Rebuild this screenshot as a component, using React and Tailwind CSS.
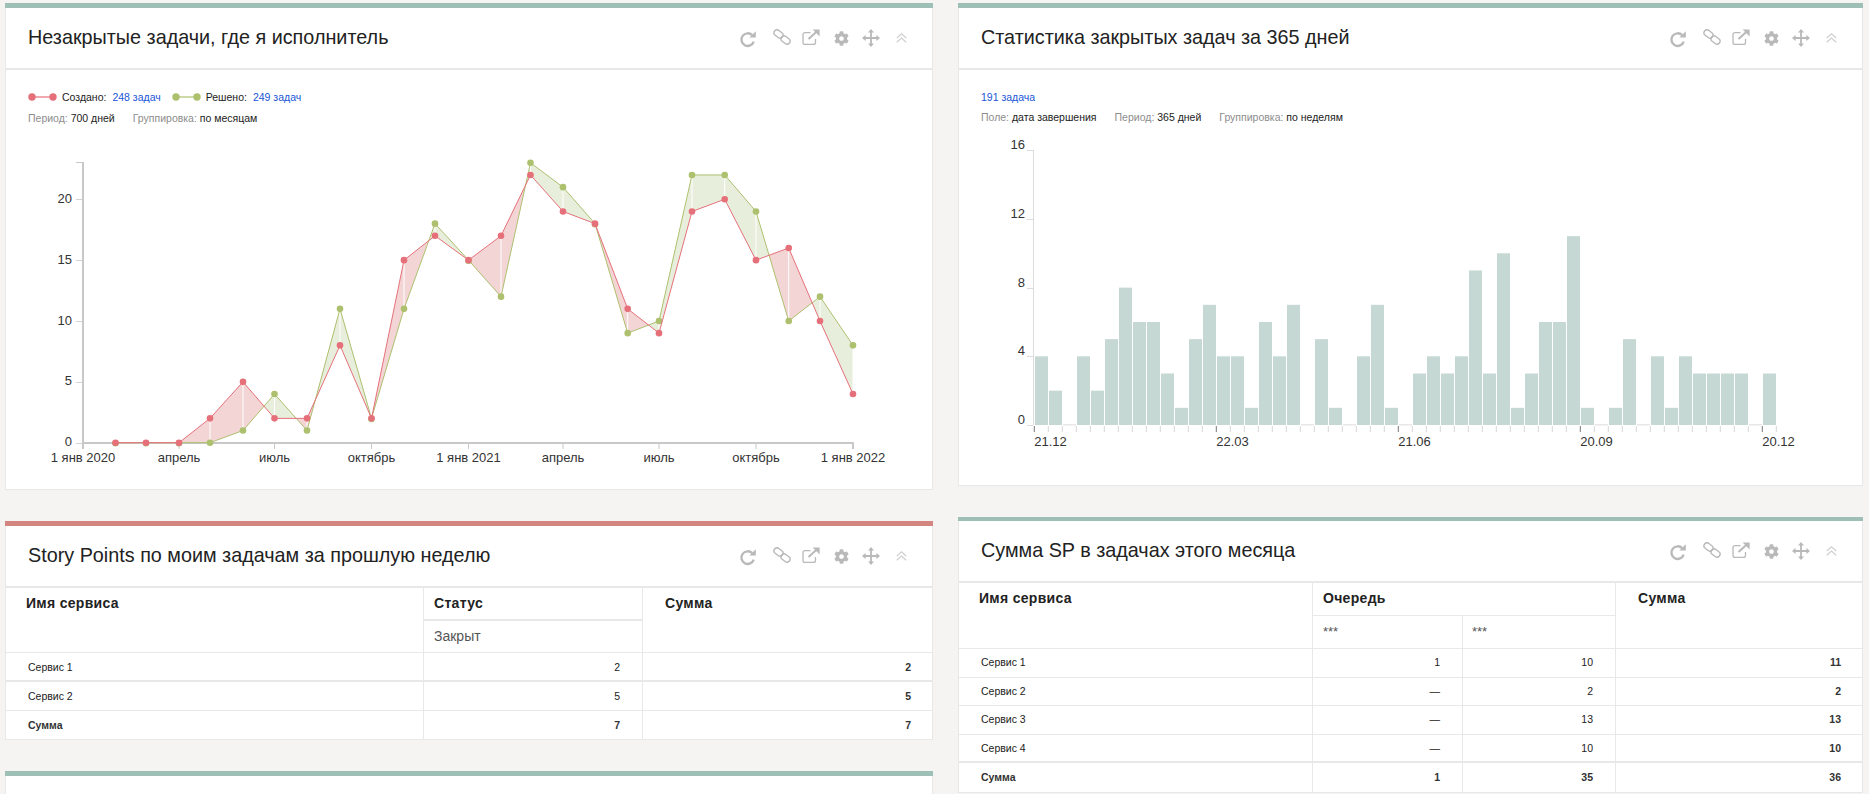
import React from "react";
import { FaCog } from "react-icons/fa";

const FONT = "font-['Liberation_Sans',Arial,sans-serif]";
const GRAY = "#b9b9b9";

function Refresh() {
  return (
    <svg width="18" height="18" viewBox="0 0 18 18" className="mt-[1px] ml-[2px]">
      <path d="M13.2 5.2A6.3 6.3 0 1 0 14.7 11.6" fill="none" stroke={GRAY} strokeWidth="2.4" />
      <polygon points="16.8,1.2 16.8,7.6 10.4,7.6" fill={GRAY} />
    </svg>
  );
}
function LinkIcon() {
  return (
    <svg width="18" height="16" viewBox="0 0 18 16" className="mb-[3px] ml-[1px]">
      <rect x="0.6" y="2" width="9.8" height="6" rx="3" transform="rotate(38 5.5 5)" fill="none" stroke={GRAY} strokeWidth="1.4" />
      <rect x="7.6" y="8" width="9.8" height="6" rx="3" transform="rotate(38 12.5 11)" fill="none" stroke={GRAY} strokeWidth="1.4" />
    </svg>
  );
}
function External() {
  return (
    <svg width="18" height="16" viewBox="0 0 18 16" className="mb-[2px]">
      <path d="M8.5 3.6H3a2 2 0 0 0-2 2v7.9a2 2 0 0 0 2 2h8.5a2 2 0 0 0 2-2V10" fill="none" stroke={GRAY} strokeWidth="1.3" />
      <path d="M6.5 10L14 3.2" fill="none" stroke={GRAY} strokeWidth="2" />
      <polygon points="10.6,0.4 17.6,0.4 17.6,7.4" fill={GRAY} />
    </svg>
  );
}
function Move() {
  return (
    <svg width="18" height="18" viewBox="0 0 18 18">
      <path d="M9 2V16M2 9H16" fill="none" stroke={GRAY} strokeWidth="1.8" />
      <polygon points="9,0 12,3.6 6,3.6" fill={GRAY} />
      <polygon points="9,18 12,14.4 6,14.4" fill={GRAY} />
      <polygon points="0,9 3.6,6 3.6,12" fill={GRAY} />
      <polygon points="18,9 14.4,6 14.4,12" fill={GRAY} />
    </svg>
  );
}
function Chevrons() {
  return (
    <svg width="11" height="10" viewBox="0 0 11 10">
      <path d="M0.8 5L5.5 0.9L10.2 5M0.8 9.2L5.5 5.1L10.2 9.2" fill="none" stroke="#cfcfcf" strokeWidth="1.2" />
    </svg>
  );
}

function Slot({ children, className = "" }) {
  return <span className={"flex w-[30px] items-center justify-center " + className}>{children}</span>;
}

function Card({ bar, barH, title, hdr, className = "", children }) {
  return (
    <section className={"bg-white border-x border-b border-[#e8e8e8] " + className}>
      <div className={"-mx-px " + bar + " " + barH} />
      <header className={"flex items-center justify-between border-b-2 border-[#e8e8e8] pl-[22px] pr-[16px] " + hdr}>
        <h2 className="text-[19.8px] leading-[24px] font-normal text-[#222] mb-[2px]">{title}</h2>
        <div className="flex items-center">
          <Slot className="mr-[4px]"><Refresh /></Slot>
          <Slot><LinkIcon /></Slot>
          <Slot><External /></Slot>
          <Slot><FaCog size={15} color={GRAY} /></Slot>
          <Slot><Move /></Slot>
          <Slot><Chevrons /></Slot>
        </div>
      </header>
      {children}
    </section>
  );
}

function Marker({ color }) {
  return (
    <svg width="29" height="8" viewBox="0 0 29 8" className="shrink-0">
      <path d="M4 4H25" stroke={color} strokeWidth="1.2" />
      <circle cx="4" cy="4" r="3.7" fill={color} />
      <circle cx="25" cy="4" r="3.7" fill={color} />
    </svg>
  );
}

const Muted = ({ children }) => <span className="text-[#8d8d8d]">{children}</span>;
const Link = ({ children }) => <span className="text-[#1a56d6]">{children}</span>;

/* ---------- first chart ---------- */
const XS = [115.5, 146, 179, 210, 243, 274.5, 307, 340, 371.5, 404, 435, 468.5, 501, 530.5, 563, 595, 627.7, 659, 692, 724.7, 756, 788.7, 820, 853];
const CREATED = [0, 0, 0, 2, 5, 2, 2, 8, 2, 15, 17, 15, 17, 22, 19, 18, 11, 9, 19, 20, 15, 16, 10, 4];
const RESOLVED = [0, 0, 0, 0, 1, 4, 1, 11, 2, 11, 18, 15, 12, 23, 21, 18, 9, 10, 22, 22, 19, 10, 12, 8];
const Y0 = 442.7;
const yv = (v) => Y0 - v * 12.17;
const PINK = "#f3d5d6";
const PALE = "#e8eedc";
const RED = "#e6707a";
const GREEN = "#adc06e";

function areas() {
  const out = [];
  for (let i = 0; i < XS.length - 1; i++) {
    const x1 = XS[i], x2 = XS[i + 1];
    const d1 = CREATED[i] - RESOLVED[i], d2 = CREATED[i + 1] - RESOLVED[i + 1];
    const c1 = yv(CREATED[i]), c2 = yv(CREATED[i + 1]), r1 = yv(RESOLVED[i]), r2 = yv(RESOLVED[i + 1]);
    if (d1 === 0 && d2 === 0) continue;
    if (d1 * d2 >= 0) {
      out.push({ p: `${x1},${c1} ${x2},${c2} ${x2},${r2} ${x1},${r1}`, f: d1 + d2 > 0 ? PINK : PALE });
    } else {
      const t = d1 / (d1 - d2);
      const xm = x1 + (x2 - x1) * t, ym = c1 + (c2 - c1) * t;
      out.push({ p: `${x1},${c1} ${xm},${ym} ${x1},${r1}`, f: d1 > 0 ? PINK : PALE });
      out.push({ p: `${x2},${c2} ${xm},${ym} ${x2},${r2}`, f: d2 > 0 ? PINK : PALE });
    }
  }
  return out;
}

function LineChart() {
  const ticks = [
    [83, "1 янв 2020"], [179, "апрель"], [274.5, "июль"], [371.5, "октябрь"], [468.5, "1 янв 2021"],
    [563, "апрель"], [659, "июль"], [756, "октябрь"], [853, "1 янв 2022"],
  ];
  const poly = (arr) => arr.map((v, i) => `${XS[i]},${yv(v)}`).join(" ");
  return (
    <svg width="926" height="349" viewBox="6 140 926 349" className="block">
      {areas().map((a, i) => <polygon key={i} points={a.p} fill={a.f} />)}
      {XS.map((x, i) => CREATED[i] !== RESOLVED[i] && (
        <line key={i} x1={x} x2={x} y1={yv(CREATED[i])} y2={yv(RESOLVED[i])} stroke="#fff" strokeWidth="1" />
      ))}
      <path d="M83 162.5H76M83 162V444" stroke="#c8c8c8" strokeWidth="1" fill="none" />
      <path d="M83 162V444" stroke="#c8c8c8" strokeWidth="2" fill="none" />
      <path d="M82 443H854" stroke="#c8c8c8" strokeWidth="2" fill="none" />
      {[0, 5, 10, 15, 20].map((v) => (
        <g key={v}>
          <line x1="76" x2="82" y1={Math.round(yv(v)) + 0.5} y2={Math.round(yv(v)) + 0.5} stroke="#d4d4d4" />
          <text x="72" y={yv(v) + 3.5} textAnchor="end" fontSize="13" fill="#333">{v}</text>
        </g>
      ))}
      {ticks.map(([x, t], i) => (
        <g key={i}>
          <line x1={x} x2={x} y1="443" y2="449" stroke="#c8c8c8" strokeWidth={i === 0 || i === 8 ? 2 : 1} />
          <text x={x} y="462" textAnchor="middle" fontSize="13" fill="#333">{t}</text>
        </g>
      ))}
      <polyline points={poly(RESOLVED)} fill="none" stroke={GREEN} strokeWidth="1" />
      {RESOLVED.map((v, i) => <circle key={i} cx={XS[i]} cy={yv(v) + (v === CREATED[i] ? 0.6 : 0)} r="3.3" fill={GREEN} />)}
      <polyline points={poly(CREATED)} fill="none" stroke={RED} strokeWidth="1" />
      {CREATED.map((v, i) => <circle key={i} cx={XS[i]} cy={yv(v)} r="3.3" fill={RED} />)}
    </svg>
  );
}

/* ---------- second chart ---------- */
const BARS = [4, 2, 0, 4, 2, 5, 8, 6, 6, 3, 1, 5, 7, 4, 4, 1, 6, 4, 7, 0, 5, 1, 0, 4, 7, 1, 0, 3, 4, 3, 4, 9, 3, 10, 1, 3, 6, 6, 11, 1, 0, 1, 5, 0, 4, 1, 4, 3, 3, 3, 3, 0, 3];

function BarChart() {
  const tx = (i) => 1034.3 + 14 * i;
  const major = { 0: "21.12", 13: "22.03", 26: "21.06", 39: "20.09", 52: "20.12" };
  return (
    <svg width="903" height="355" viewBox="959 130 903 355" className="block">
      <path d="M1033.5 150V425" stroke="#dcdcdc" fill="none" />
      {[0, 4, 8, 12, 16].map((v) => {
        const y = 425 - v * 17.17;
        return (
          <g key={v}>
            <line x1="1027" x2="1033" y1={Math.round(y) + 0.5} y2={Math.round(y) + 0.5} stroke="#dcdcdc" />
            <text x="1025" y={y - 1} textAnchor="end" fontSize="13" fill="#333">{v}</text>
          </g>
        );
      })}
      {BARS.map((v, i) => v > 0
        ? <rect key={i} x={tx(i) + 0.7} y={425 - v * 17.17} width="13" height={v * 17.17} fill="#c6d8d4" />
        : <rect key={i} x={tx(i) + 0.7} y="424" width="13" height="1.5" fill="#e9e7e7" />)}
      {Array.from({ length: 54 }, (_, i) => (
        <line key={i} x1={tx(i)} x2={tx(i)} y1="426" y2="432" stroke={major[i] ? "#777" : "#d6d6d6"} />
      ))}
      {Object.entries(major).map(([i, t]) => (
        <text key={i} x={tx(Number(i))} y="446" fontSize="13" fill="#333">{t}</text>
      ))}
    </svg>
  );
}

/* ---------- tables ---------- */
const LINE = "border-[#e8e8e8]";
const TH = "align-top text-left text-[14px] leading-[16px] font-bold text-[#222] tracking-[0.3px]";
const SUB = "align-top text-left font-normal text-[#555]";
const ROW = "text-[10.5px] leading-[14px] text-[#222] align-middle";

function Cell({ children, className = "", bold }) {
  return <td className={`${ROW} ${LINE} ${bold ? "font-bold text-[#333]" : ""} ${className}`}>{children}</td>;
}

function TableOne() {
  const rows = [["Сервис 1", "2", "2", 29, "border-b-2"], ["Сервис 2", "5", "5", 29, "border-b"], ["Сумма", "7", "7", 28, ""]];
  return (
    <table className="w-full table-fixed border-separate border-spacing-0">
      <colgroup><col className="w-[418px]" /><col className="w-[219px]" /><col /></colgroup>
      <thead>
        <tr className="h-[33px]">
          <th rowSpan={2} className={`${TH} ${LINE} border-r border-b pl-[20px] pt-[7px]`}>Имя сервиса</th>
          <th className={`${TH} ${LINE} border-r border-b-2 pl-[10px] pt-[7px]`}>Статус</th>
          <th rowSpan={2} className={`${TH} ${LINE} border-b pl-[22px] pt-[7px]`}>Сумма</th>
        </tr>
        <tr className="h-[32px]">
          <th className={`${SUB} ${LINE} border-r border-b pl-[10px] pt-[7px] text-[14px] leading-[16px]`}>Закрыт</th>
        </tr>
      </thead>
      <tbody>
        {rows.map(([a, b, c, h, line]) => (
          <tr key={a} style={{ height: h }}>
            <Cell bold={a === "Сумма"} className={`border-r pl-[22px] ${line}`}>{a}</Cell>
            <Cell bold={a === "Сумма"} className={`border-r pr-[22px] text-right ${line}`}>{b}</Cell>
            <Cell bold className={`pr-[21px] text-right ${line}`}>{c}</Cell>
          </tr>
        ))}
      </tbody>
    </table>
  );
}

function TableTwo() {
  const rows = [
    ["Сервис 1", "1", "10", "11", "border-b"],
    ["Сервис 2", "—", "2", "2", "border-b"],
    ["Сервис 3", "—", "13", "13", "border-b"],
    ["Сервис 4", "—", "10", "10", "border-b-2"],
    ["Сумма", "1", "35", "36", ""],
  ];
  return (
    <table className="w-full table-fixed border-separate border-spacing-0">
      <colgroup><col className="w-[354px]" /><col className="w-[150px]" /><col className="w-[153px]" /><col /></colgroup>
      <thead>
        <tr className="h-[33px]">
          <th rowSpan={2} className={`${TH} ${LINE} border-r border-b pl-[20px] pt-[7px]`}>Имя сервиса</th>
          <th colSpan={2} className={`${TH} ${LINE} border-r border-b pl-[10px] pt-[7px]`}>Очередь</th>
          <th rowSpan={2} className={`${TH} ${LINE} border-b pl-[22px] pt-[7px]`}>Сумма</th>
        </tr>
        <tr className="h-[33px]">
          <th className={`${SUB} ${LINE} border-r border-b pl-[10px] pt-[9px] text-[13px] leading-[14px]`}>***</th>
          <th className={`${SUB} ${LINE} border-r border-b pl-[9px] pt-[9px] text-[13px] leading-[14px]`}>***</th>
        </tr>
      </thead>
      <tbody>
        {rows.map(([a, b, c, d, line]) => (
          <tr key={a} className="h-[28.6px]">
            <Cell bold={a === "Сумма"} className={`border-r pl-[22px] pb-[1px] ${line}`}>{a}</Cell>
            <Cell bold={a === "Сумма"} className={`border-r pr-[22px] pb-[1px] text-right ${line}`}>{b}</Cell>
            <Cell bold={a === "Сумма"} className={`border-r pr-[22px] pb-[1px] text-right ${line}`}>{c}</Cell>
            <Cell bold className={`pr-[21px] pb-[1px] text-right ${line}`}>{d}</Cell>
          </tr>
        ))}
      </tbody>
    </table>
  );
}

export default function App() {
  return (
    <div className={`h-[794px] overflow-hidden bg-[#f5f4f2] pt-[3px] pl-[5px] pr-[6px] flex gap-[25px] ${FONT}`}>
      <div className="w-[928px] shrink-0 flex flex-col gap-[31px]">
        <Card bar="bg-[#9dbfb5]" barH="h-[5px]" title="Незакрытые задачи, где я исполнитель" hdr="h-[62px]">
          <div className="h-[70px] pt-[20px] pl-[22px] text-[10.5px] leading-[14px] text-[#222]">
            <div className="flex items-center">
              <Marker color="#e6707a" />
              <span className="ml-[5px]">Создано:</span>
              <span className="ml-[6px]"><Link>248 задач</Link></span>
              <span className="ml-[11px]"><Marker color="#adc06e" /></span>
              <span className="ml-[5px]">Решено:</span>
              <span className="ml-[6px]"><Link>249 задач</Link></span>
            </div>
            <div className="mt-[7px] flex gap-[18px]">
              <span><Muted>Период:</Muted> 700 дней</span>
              <span><Muted>Группировка:</Muted> по месяцам</span>
            </div>
          </div>
          <LineChart />
        </Card>
        <Card bar="bg-[#d3867f]" barH="h-[5px]" title="Story Points по моим задачам за прошлую неделю" hdr="h-[62px]">
          <TableOne />
        </Card>
        <Card bar="bg-[#9dbfb5]" barH="h-[5px]" title="" hdr="h-[62px]" />
      </div>
      <div className="w-[905px] shrink-0 flex flex-col gap-[31px]">
        <Card bar="bg-[#9dbfb5]" barH="h-[5px]" title="Статистика закрытых задач за 365 дней" hdr="h-[62px]">
          <div className="h-[60px] pt-[20px] pl-[22px] text-[10.5px] leading-[14px] text-[#222]">
            <div><Link>191 задача</Link></div>
            <div className="mt-[6px] flex gap-[18px]">
              <span><Muted>Поле:</Muted> дата завершения</span>
              <span><Muted>Период:</Muted> 365 дней</span>
              <span><Muted>Группировка:</Muted> по неделям</span>
            </div>
          </div>
          <BarChart />
        </Card>
        <Card bar="bg-[#9dbfb5]" barH="h-[4px]" title="Сумма SP в задачах этого месяца" hdr="h-[62px]">
          <TableTwo />
        </Card>
      </div>
    </div>
  );
}
